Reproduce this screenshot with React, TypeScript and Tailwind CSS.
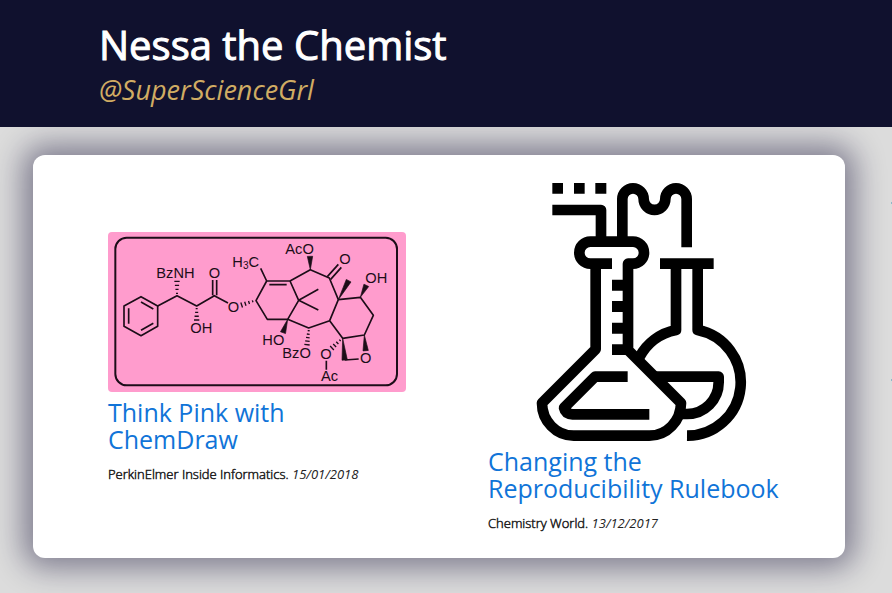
import React from "react";

type Pt = [number, number];

/** Evenly spaced cross strokes that widen towards `b`: a receding (hashed) bond. */
function Hash({ a, b, n = 5 }: { a: Pt; b: Pt; n?: number }) {
  const dx = b[0] - a[0];
  const dy = b[1] - a[1];
  const len = Math.hypot(dx, dy);
  const nx = -dy / len;
  const ny = dx / len;
  const d = Array.from({ length: n }, (_, i) => {
    const t = i / (n - 1);
    const w = 3 + t * 5;
    const x = a[0] + dx * t;
    const y = a[1] + dy * t;
    return `M${x - nx * w} ${y - ny * w}L${x + nx * w} ${y + ny * w}`;
  }).join("");
  return <path d={d} strokeWidth={4} />;
}

/** Solid wedge from point `a` to a blunt end at `b`: an approaching bond. */
function Wedge({ a, b }: { a: Pt; b: Pt }) {
  const dx = b[0] - a[0];
  const dy = b[1] - a[1];
  const len = Math.hypot(dx, dy);
  const nx = (-dy / len) * 8;
  const ny = (dx / len) * 8;
  return (
    <path
      d={`M${a[0]} ${a[1]}L${b[0] + nx} ${b[1] + ny}L${b[0] - nx} ${b[1] - ny}Z`}
      fill="#1c0d18"
      strokeWidth={2}
    />
  );
}

function Molecule() {
  return (
    <svg viewBox="24 24 894 480" className="block w-full rounded bg-[#ff9ccd]" role="img" aria-label="Taxol structure">
      <g fill="none" stroke="#1c0d18" strokeWidth={5} strokeLinejoin="round">
        <rect x="46" y="41" width="845" height="443" rx="34" strokeWidth={6} />
        <path d="M123 218L173 246V307L123 335L72 307V246ZM86 253V299M123 234L160 255M123 319L160 298" />
        <path d="M173 246L231 215L290 246L343 215L384 237M338 214V168M350 214V168" />
        <Hash a={[231, 208]} b={[231, 172]} n={4} />
        <Hash a={[290, 254]} b={[290, 288]} n={4} />
        <Hash a={[458, 232]} b={[425, 243]} n={4} />
        <g transform="translate(450 0)">
          <path d="M32 133L50 171H120L146 229L113 286H52L18 230L50 171M58 182H110M205 196L146 229L205 258" />
          <path d="M120 171L181 137L238 162L265 227L331 220L370 274L343 333L278 343L239 290L265 227M239 290L176 312L113 286" />
          <path d="M242 166L274 130M232 158L265 121M284 408L326 405M229 410V437" />
          <Wedge a={[181, 137]} b={[180, 97]} />
          <Wedge a={[265, 227]} b={[296, 170]} />
          <Wedge a={[331, 220]} b={[349, 184]} />
          <Wedge a={[278, 343]} b={[284, 408]} />
          <Wedge a={[343, 333]} b={[347, 380]} />
          <Wedge a={[113, 286]} b={[99, 326]} />
          <Hash a={[176, 320]} b={[171, 362]} />
          <Hash a={[270, 349]} b={[246, 372]} n={4} />
        </g>
      </g>
      <g fill="#1c0d18" fontSize="44" className="font-['Liberation_Sans',Arial,sans-serif]">
        <text x="169" y="163">BzNH</text>
        <text x="326" y="163">O</text>
        <text x="271" y="327">OH</text>
        <text x="383" y="263">O</text>
        <text x="397" y="129">
          H<tspan fontSize="30" dy="6">3</tspan>
          <tspan dy="-6">C</tspan>
        </text>
        <text x="556" y="90">AcO</text>
        <text x="718" y="120">O</text>
        <text x="796" y="176">OH</text>
        <text x="487" y="364">HO</text>
        <text x="547" y="401">BzO</text>
        <text x="661" y="405">O</text>
        <text x="780" y="417">O</text>
        <text x="663" y="471">Ac</text>
      </g>
    </svg>
  );
}

function Flasks() {
  return (
    <svg viewBox="-126 24 894 774" className="block w-full" role="img" aria-label="Laboratory flasks">
      <path d="M67 24h32v32h-32zM132 24h32v32h-32zM196 24h33v32h-33zM246 314h48v33h-48zM246 378h48v33h-48zM246 443h48v33h-48zM246 508h54v32h-54zM390 250h161v32h-161z" />
      <g fill="none" stroke="#000" strokeWidth="32" strokeLinejoin="round">
        <path d="M67 105H213V195M277 195V72A32 32 0 0 1 341 72A32.500 32.500 0 0 0 406 72A32 32 0 0 1 470 72V217" />
        <path d="M246 266H181A33 33 0 0 1 181 200H309A33 33 0 0 1 309 266H294V525L453 684A95 98 0 0 1 358 782H131A95 98 0 0 1 36 684L197 523V266" />
        <path d="M293 605H195L102 698Q106 717 128 718H358" />
        <path d="M438 270V465A160 160 0 0 0 328 547M503 270V465A160 160 0 0 1 471 782M375 605H566V622A95 95 0 0 1 471 717H450" />
      </g>
    </svg>
  );
}

interface ArticleProps {
  picture: React.ReactNode;
  title: string;
  source: string;
  date: string;
}

function Article({ picture, title, source, date }: ArticleProps) {
  return (
    <article className="pl-[49px] pr-[33px]">
      {picture}
      <h2 className="mt-[7px] text-[25px] leading-[27px] text-[#1074d8]">
        <a href="#article">{title}</a>
      </h2>
      <p className="mt-[11px] text-[13px] leading-5 font-light text-[#222]">
        <span className="[-webkit-text-stroke:0.5px_#222]">{source}.</span> <em className="font-normal">{date}</em>
      </p>
    </article>
  );
}

export default function App() {
  return (
    <div className="min-h-screen overflow-hidden bg-[#dcdcdc] font-['Open_Sans',sans-serif]">
      <header className="relative z-10 bg-[#10112e] px-[99px] pt-[19px] pb-[18px]">
        <h1 className="text-[40px] leading-[52px] text-white [-webkit-text-stroke:1px_white]">Nessa the Chemist</h1>
        <p className="text-[27px] leading-[38px] text-[#d0ac63] italic">@SuperScienceGrl</p>
      </header>
      <main className="relative pt-7 pr-[47px] pb-[35px] pl-[33px]">
        <section className="grid grid-cols-2 items-center rounded-xl bg-white px-[26px] pt-7 pb-[25px] shadow-[0_0_30px_10px_rgba(16,12,50,0.45)]">
          <Article
            picture={<Molecule />}
            title="Think Pink with ChemDraw"
            source="PerkinElmer Inside Informatics"
            date="15/01/2018"
          />
          <Article
            picture={<Flasks />}
            title="Changing the Reproducibility Rulebook"
            source="Chemistry World"
            date="13/12/2017"
          />
        </section>
        <span className="absolute top-[75px] right-0 h-[2px] w-px bg-[#8fb8c8]" />
        <span className="absolute top-[252px] right-0 h-[2px] w-px bg-[#8fb8c8]" />
      </main>
    </div>
  );
}
